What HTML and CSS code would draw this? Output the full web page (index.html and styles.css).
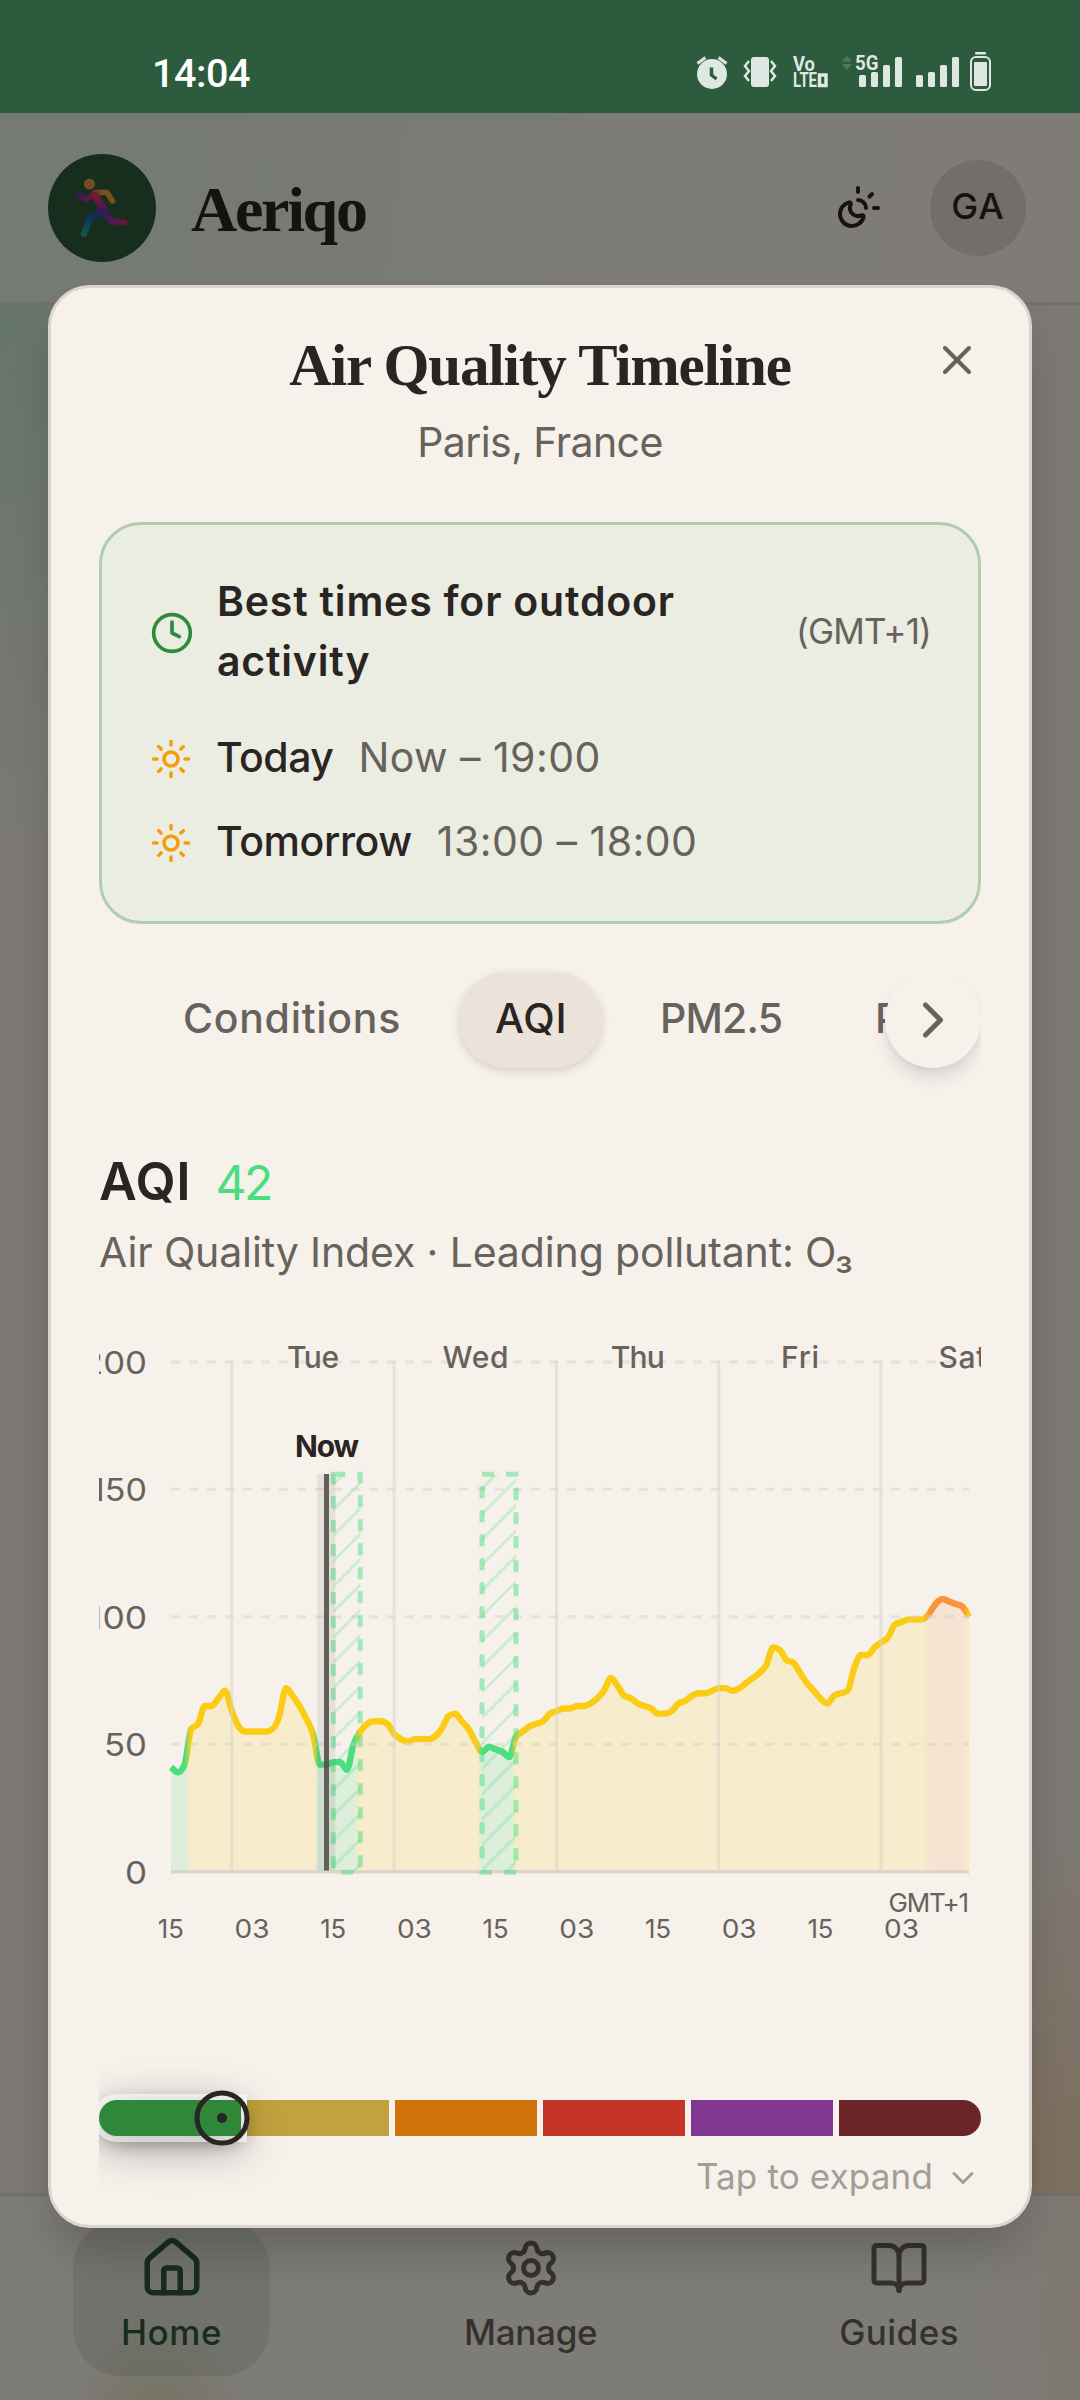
FILE: index.html
```html
<!DOCTYPE html>
<html lang="en">
<head>
<meta charset="utf-8">
<title>Aeriqo</title>
<meta name="viewport" content="width=device-width">
<link rel="stylesheet" href="styles.css">
</head>
<body>
<div class="screen">
  <div class="status">
    <span class="status-time">14:04</span>
    <svg class="status-icons" width="304" height="48" viewBox="692 48 304 48" fill="#dfe7e2">
      <ellipse cx="712" cy="74" rx="15" ry="15"/>
      <path d="M697.500 63.500l8-6M726.500 63.500l-8-6" stroke="#dfe7e2" stroke-width="3"/>
      <path d="M711.500 67.500v7.500l5 4" fill="none" stroke="#2d5b3d" stroke-width="3.500"/>
      <rect x="751" y="57" width="18" height="30" rx="3"/>
      <path d="M749 62l-4 5 4 5-4 5 4 5M771 62l4 5-4 5 4 5-4 5" transform="translate(0 -1)" fill="none" stroke="#dfe7e2" stroke-width="2.500"/>
      <text class="vo" x="793" y="71" textLength="22" lengthAdjust="spacingAndGlyphs">Vo</text>
      <text class="vo" x="793" y="87" textLength="24" lengthAdjust="spacingAndGlyphs">LTE</text>
      <path d="M819.500 75h6.500v10.500h-6.500z" fill="none" stroke="#dfe7e2" stroke-width="3.500"/>
      <path d="M842 61.500l5-6 5 6zM842 64l5 6 5-6z" fill="#50775d"/>
      <text class="fiveg" x="855" y="70" textLength="23.500" lengthAdjust="spacingAndGlyphs">5G</text>
      <rect x="859" y="75" width="7" height="12" rx="1.500"/><rect x="871" y="72" width="7" height="15" rx="1.500"/><rect x="883" y="65" width="7" height="22" rx="1.500"/><rect x="895" y="57" width="7" height="30" rx="1.500"/>
      <rect x="916" y="75" width="7" height="12" rx="1.500"/><rect x="928" y="72" width="7" height="15" rx="1.500"/><rect x="940" y="65" width="7" height="22" rx="1.500"/><rect x="952" y="57" width="7" height="30" rx="1.500"/>
      <rect x="971" y="57" width="19" height="33" rx="5" fill="none" stroke="#dfe7e2" stroke-width="2"/>
      <rect x="974" y="62" width="13" height="24" rx="1"/><rect x="975" y="52" width="11" height="2.500" rx="1"/>
    </svg>
  </div>

  <div class="app">
    <header class="topbar">
      <div class="logo">
        <svg width="60" height="66" viewBox="72 175 60 66" fill="none" stroke-linecap="round" stroke-linejoin="round">
          <defs>
            <linearGradient id="arm" gradientUnits="userSpaceOnUse" x1="94" y1="198" x2="106" y2="190"><stop offset="0" stop-color="#d8384f"/><stop offset=".7" stop-color="#f0a33a"/></linearGradient>
            <linearGradient id="hand" gradientUnits="userSpaceOnUse" x1="79" y1="194" x2="95" y2="194"><stop offset="0" stop-color="#7a2fb5"/><stop offset="1" stop-color="#d0357a"/></linearGradient>
            <linearGradient id="torso" gradientUnits="userSpaceOnUse" x1="96" y1="196" x2="104" y2="213"><stop offset="0" stop-color="#d93a66"/><stop offset="1" stop-color="#8a2bb8"/></linearGradient>
            <linearGradient id="leg" gradientUnits="userSpaceOnUse" x1="104" y1="212" x2="84" y2="235"><stop offset="0" stop-color="#5a34b4"/><stop offset=".4" stop-color="#1c62c4"/><stop offset="1" stop-color="#1fb394"/></linearGradient>
            <linearGradient id="foot" gradientUnits="userSpaceOnUse" x1="105" y1="213" x2="126" y2="223"><stop offset="0" stop-color="#7a2fb5"/><stop offset=".7" stop-color="#b5309a"/><stop offset="1" stop-color="#c83a5a"/></linearGradient>
          </defs>
          <circle cx="89.500" cy="184" r="5.500" fill="#e69a3c"/>
          <path d="M79.500 194.500l6.500 6 7-7" stroke="url(#hand)" stroke-width="5"/>
          <path d="M95 192.500h12l5.500 8.500" stroke="url(#arm)" stroke-width="5.500"/>
          <path d="M95.500 196l8.500 15" stroke="url(#torso)" stroke-width="8"/>
          <path d="M105.500 214l5.500 7 13.500 1.500" stroke="url(#foot)" stroke-width="6"/>
          <path d="M102 211.500l-11.500 6.500-6.500 16" stroke="url(#leg)" stroke-width="6"/>
        </svg>
      </div>
      <span class="brand">Aeriqo</span>
      <svg class="theme" width="48" height="48" viewBox="0 0 24 24" fill="none" stroke="currentColor" stroke-width="2" stroke-linecap="round" stroke-linejoin="round"><path d="M12 2v2"/><path d="M14.837 16.385a6 6 0 1 1-7.223-7.222c.624-.147.97.66.715 1.248a4 4 0 0 0 5.26 5.259c.589-.255 1.396.09 1.248.715"/><path d="M16 12a4 4 0 0 0-4-4"/><path d="m19 5-1.256 1.256"/><path d="M20 12h2"/></svg>
      <div class="user">GA</div>
    </header>
    <main class="backdrop"></main>
    <nav class="tabbar">
      <a class="nav-item nav-active">
        <svg width="60" height="60" viewBox="0 0 24 24"><path d="M15 21v-8a1 1 0 0 0-1-1h-4a1 1 0 0 0-1 1v8"/><path d="M3 10a2 2 0 0 1 .709-1.528l7-5.999a2 2 0 0 1 2.582 0l7 5.999A2 2 0 0 1 21 10v9a2 2 0 0 1-2 2H5a2 2 0 0 1-2-2z"/></svg>
        <span class="nav-home">Home</span>
      </a>
      <a class="nav-item">
        <svg width="60" height="60" viewBox="0 0 24 24"><path d="M9.671 4.136a2.340 2.340 0 0 1 4.659 0 2.340 2.340 0 0 0 3.319 1.915 2.340 2.340 0 0 1 2.330 4.033 2.340 2.340 0 0 0 0 3.831 2.340 2.340 0 0 1-2.330 4.033 2.340 2.340 0 0 0-3.319 1.915 2.340 2.340 0 0 1-4.659 0 2.340 2.340 0 0 0-3.320-1.915 2.340 2.340 0 0 1-2.330-4.033 2.340 2.340 0 0 0 0-3.831A2.340 2.340 0 0 1 6.350 6.051a2.340 2.340 0 0 0 3.319-1.915"/><circle cx="12" cy="12" r="3"/></svg>
        <span class="nav-manage">Manage</span>
      </a>
      <a class="nav-item">
        <svg width="60" height="60" viewBox="0 0 24 24"><path d="M12 7v14"/><path d="M3 18a1 1 0 0 1-1-1V4a1 1 0 0 1 1-1h5a4 4 0 0 1 4 4 4 4 0 0 1 4-4h5a1 1 0 0 1 1 1v13a1 1 0 0 1-1 1h-6a3 3 0 0 0-3 3 3 3 0 0 0-3-3z"/></svg>
        <span class="nav-guides">Guides</span>
      </a>
    </nav>
  </div>

  <div class="overlay">
    <section class="modal">
      <svg class="close" width="48" height="48" viewBox="0 0 24 24"><path d="M18 6 6 18"/><path d="m6 6 12 12"/></svg>
      <h1 class="title">Air Quality Timeline</h1>
      <p class="place">Paris, France</p>

      <div class="best">
        <div class="best-head">
          <svg class="clock" width="44" height="44" viewBox="0 0 24 24"><circle cx="12" cy="12" r="10"/><path d="M12 6v6l4 2"/></svg>
          <h2 class="best-title">Best times for outdoor activity</h2>
          <span class="zone">(GMT+1)</span>
        </div>
        <div class="slot">
          <svg class="sun" width="42" height="42" viewBox="0 0 24 24"><circle cx="12" cy="12" r="4"/><path d="M12 2v2M12 20v2M4.930 4.930l1.410 1.410M17.660 17.660l1.410 1.410M2 12h2M20 12h2M6.340 17.660l-1.410 1.410M19.070 4.930l-1.410 1.410"/></svg>
          <span class="slot-day slot-today">Today</span><span class="slot-time">Now – 19:00</span>
        </div>
        <div class="slot">
          <svg class="sun" width="42" height="42" viewBox="0 0 24 24"><circle cx="12" cy="12" r="4"/><path d="M12 2v2M12 20v2M4.930 4.930l1.410 1.410M17.660 17.660l1.410 1.410M2 12h2M20 12h2M6.340 17.660l-1.410 1.410M19.070 4.930l-1.410 1.410"/></svg>
          <span class="slot-day">Tomorrow</span><span class="slot-time">13:00 – 18:00</span>
        </div>
      </div>

      <div class="tabs">
        <span class="tab">Conditions</span>
        <span class="tab tab-on">AQI</span>
        <span class="tab tab-pm">PM2.5</span>
        <span class="tab tab-pm">PM10</span>
        <span class="next"><svg width="60" height="60" viewBox="0 0 24 24"><path d="m9 18 6-6-6-6"/></svg></span>
      </div>

      <div class="metric"><h3 class="metric-name">AQI</h3><span class="metric-value">42</span></div>
      <p class="metric-note">Air Quality Index · Leading pollutant: O₃</p>

      <svg class="chart" id="chart" width="882" height="660" viewBox="99 1320 882 660">
        <defs>
          <linearGradient id="level" gradientUnits="userSpaceOnUse" x1="0" x2="1080" y1="0" y2="0"></linearGradient>
          <pattern id="hatch" patternUnits="userSpaceOnUse" width="18" height="18" patternTransform="translate(8.300 0) rotate(45)"><rect width="3" height="18" fill="#4ade80" fill-opacity=".24"/></pattern>
        </defs>
        <path id="area" fill="url(#level)" fill-opacity=".15"/>
        <path id="line" fill="none" stroke="url(#level)" stroke-width="6.400" stroke-linejoin="round"/>
        <g id="grid" stroke="#dad2ca" stroke-opacity=".5" stroke-width="3"></g>
        <path d="M171 1871.700H969" stroke="#ddd5cb" stroke-width="3.500"/>
        <g fill="url(#hatch)" stroke="#4ade80" stroke-opacity=".48" stroke-width="5" stroke-dasharray="12 12">
          <rect x="333.300" y="1474.300" width="27" height="398"/>
          <rect x="482" y="1474.300" width="34" height="398"/>
        </g>
        <rect x="317.300" y="1474" width="18" height="396.500" fill="#57534e" fill-opacity=".1"/>
        <path d="M326.500 1474v396.500" stroke="#57534e" stroke-opacity=".92" stroke-width="5"/>
        <text class="now" x="326.500" y="1456.700">Now</text>
        <g class="ylab" id="ylab"></g>
        <g class="days" id="days"></g>
        <g class="hours" id="hours"></g>
        <text class="gmt" x="968" y="1911.700">GMT+1</text>
      </svg>

      <div class="scale">
        <span class="seg seg-good"><svg class="marker" width="56" height="56" viewBox="0 0 56 56"><circle cx="28" cy="28" r="25" fill="none" stroke="#2a2523" stroke-width="5"/><circle cx="28" cy="28" r="5" fill="#2a2523"/></svg></span>
        <span class="seg seg-moderate"></span>
        <span class="seg seg-sensitive"></span>
        <span class="seg seg-unhealthy"></span>
        <span class="seg seg-very"></span>
        <span class="seg seg-hazard"></span>
      </div>
      <div class="expand">Tap to expand <svg width="36" height="36" viewBox="0 0 24 24"><path d="m6 9 6 6 6-6"/></svg></div>
    </section>
  </div>
</div>
<script src="chart.js"></script>
</body>
</html>
```
FILE: styles.css
```css
* { box-sizing: border-box; }
body { margin: 0; font-family: Inter, sans-serif; color: #2a2523; }
h1, h2, h3, p { margin: 0; }
.screen { position: relative; width: 1080px; height: 2400px; overflow: hidden; display: flex; flex-direction: column; }

.status { height: 113px; background: #2d5b3d; display: flex; align-items: flex-start; justify-content: space-between; padding: 48px 84px 0 152px; }
.status-time { font: 500 39.5px/48px Roboto, sans-serif; letter-spacing: -.44px; color: #fff; padding-top: 2px; }
.vo { font: 700 20px Roboto, sans-serif; }
.fiveg { font: 700 21px Roboto, sans-serif; }

.app { flex: 1; display: flex; flex-direction: column; }
.topbar { height: 192px; border-bottom: 3px solid #e6dfd6; background: linear-gradient(97deg, #eaf5e8 0%, #ecf5e7 22%, #fdf8ef 66%, #fef9f1 100%); display: flex; align-items: center; padding: 0 54px 0 48px; }
.logo { width: 108px; height: 108px; border-radius: 50%; background: #2e5a3c; display: flex; align-items: center; justify-content: center; }
.brand { font: 700 64px/64px "Liberation Serif", serif; letter-spacing: -2.3px; margin-left: 35px; padding-top: 4px; flex: 1; }
.theme { margin-right: 48px; }
.user { width: 96px; height: 96px; border-radius: 50%; background: #e5dcd2; display: flex; align-items: center; justify-content: center; font-size: 36px; font-weight: 450; letter-spacing: 1px; padding-bottom: 4px; }
.backdrop { flex: 1; background:
  radial-gradient(ellipse 600px 560px at 0 0, #cbead2 0%, rgba(203,234,210,0) 100%),
  radial-gradient(ellipse 500px 380px at 100% 100%, #fadfc0 15%, rgba(250,223,192,0) 100%),
  #f9f2e9; }
.tabbar { height: 207px; border-top: 3px solid #e6dfd6; padding: 24px 0; display: flex; justify-content: space-around; align-items: flex-start; background:
  radial-gradient(ellipse 100px 110px at 158px 225px, rgba(220,214,160,.6), rgba(220,214,160,0)),
  radial-gradient(ellipse 110px 400px at 100% 60%, rgba(248,232,210,.6), rgba(248,232,210,0)),
  #fdf9f3; }
.nav-item { height: 156px; padding: 18px 48px 0; border-radius: 48px; display: flex; flex-direction: column; align-items: center; gap: 10px; font-size: 35px; line-height: 48px; font-weight: 450; color: #6b645d; }
.nav-item svg { fill: none; stroke: currentColor; stroke-width: 2; stroke-linecap: round; stroke-linejoin: round; }
.nav-active { color: #2e5a3c; background: rgba(46,90,60,.12); }
.nav-active svg { transform: scale(1.1); }
.nav-home { letter-spacing: .6px; }
.nav-manage { letter-spacing: -.3px; }
.nav-guides { letter-spacing: .45px; }

.overlay { position: absolute; inset: 113px 0 0; background: rgba(0,0,0,.5); padding: 172px 48px 0; }
.modal { position: relative; height: 1943px; border: 3px solid #ddd5cd; border-radius: 42px; background: #f6f1eb; padding: 44px 48px 0; box-shadow: 0 30px 45px -9px rgba(0,0,0,.2); }
.modal svg { display: block; }
.close { position: absolute; right: 48px; top: 48px; fill: none; stroke: #67625c; stroke-width: 2; stroke-linecap: round; }
.title { font: 700 59px/66px "Liberation Serif", serif; letter-spacing: -1.15px; text-align: center; }
.place { font-size: 41px; line-height: 60px; letter-spacing: -.6px; color: #67625c; text-align: center; margin-top: 14px; }

.best { margin-top: 50px; height: 402px; border: 3px solid #b1cdae; border-radius: 42px; background: #ebede2; padding: 46px 48px 0; }
.best-head { display: flex; align-items: center; margin-bottom: 36px; }
.clock { fill: none; stroke: #2f8a3c; stroke-width: 2; stroke-linecap: round; stroke-linejoin: round; margin-right: 23px; margin-top: 4px; }
.best-title { flex: 1; font-size: 41px; line-height: 60px; font-weight: 570; letter-spacing: .8px; }
.zone { font-size: 35px; letter-spacing: -.82px; color: #67625c; margin-right: -1px; }
.slot { display: flex; align-items: center; height: 60px; margin-bottom: 24px; font-size: 41px; line-height: 60px; }
.sun { fill: none; stroke: #f59e0b; stroke-width: 2; stroke-linecap: round; margin-right: 24px; margin-top: 4px; }
.slot-day { font-weight: 470; letter-spacing: -.4px; margin-right: 25px; }
.slot-today { letter-spacing: -.5px; margin-right: 25px; }
.slot-time { color: #67625c; letter-spacing: .45px; }

.tabs { position: relative; margin-top: 48px; height: 96px; display: flex; gap: 24px; padding-left: 48px; overflow-x: clip; }
.tab { flex: none; padding: 0 36px; border-radius: 48px; font-size: 41px; line-height: 93px; font-weight: 460; letter-spacing: .7px; color: #67625c; width: 288px; }
.tab-on { width: 143px; background: #ebe2da; color: #2a2523; box-shadow: 0 3px 9px rgba(60,50,40,.18); }
.tab-pm { width: 191px; letter-spacing: -.8px; padding-left: 34px; }
.next { position: absolute; right: 0; top: 0; width: 96px; height: 96px; border-radius: 50%; background: #f6f1eb; display: flex; align-items: center; justify-content: center; box-shadow: 0 12px 18px -3px rgba(0,0,0,.12), 0 3px 8px -3px rgba(0,0,0,.08); }
.next svg { fill: none; stroke: #67625c; stroke-width: 2; stroke-linecap: round; stroke-linejoin: round; }

.metric { margin-top: 77px; display: flex; height: 72px; line-height: 73px; }
.metric-name { font-size: 52px; font-weight: 580; letter-spacing: .7px; }
.metric-value { font-size: 48px; font-weight: 400; letter-spacing: -2.5px; line-height: 76px; color: #4ade80; margin-left: 24px; }
.metric-note { margin-top: 5px; font-size: 41px; line-height: 60px; letter-spacing: -.13px; color: #67625c; white-space: nowrap; }

.chart { margin-top: 38px; overflow: hidden; fill: #67625c; }
.chart text { stroke: none; }
.now { font-size: 30px; font-weight: 680; letter-spacing: -1.2px; text-anchor: middle; fill: #2a2523; }
.ylab { font-size: 31px; text-anchor: end; }
.days { font-size: 30px; font-weight: 550; text-anchor: middle; }
.hours { font-size: 26px; text-anchor: middle; }
.gmt { font-size: 26px; letter-spacing: -1.2px; text-anchor: end; }

.scale { margin-top: 120px; height: 36px; display: flex; gap: 6px; overflow-x: clip; }
.seg { flex: 1; }
.seg-good { position: relative; z-index: 1; background: #2f8839; border-radius: 18px 0 0 18px; box-shadow: 0 0 0 6px rgba(255,255,255,.6), 0 6px 18px rgba(0,0,0,.36), 0 9px 45px rgba(0,0,0,.38); }
.seg-moderate { background: #c1a23f; }
.seg-sensitive { background: #cf740a; }
.seg-unhealthy { background: #c43528; }
.seg-very { background: #813690; }
.seg-hazard { background: #6b2529; border-radius: 0 18px 18px 0; }
.marker { position: absolute; left: 95px; top: -10px; }
.expand { margin-top: 13px; display: flex; justify-content: flex-end; align-items: center; gap: 12px; height: 54px; font-size: 35px; letter-spacing: .15px; color: #a29d97; }
.expand svg { fill: none; stroke: currentColor; stroke-width: 2; stroke-linecap: round; stroke-linejoin: round; margin-top: 4px; }
```
FILE: chart.js
```js
const SVG = 'http://www.w3.org/2000/svg';
const hourly = [41,39,42,56,58,65,65,68,71,63,57,55,55,55,55,56,61,72,69,65,60,54,42,42,43,43,40,50,55,58,
  59,59,58,54,52,51,52,52,52,53,56,61,62,59,56,51,47,49,48,47,45,53,55,57,58,59,62,63,64,64,
  65,65,66,68,71,76,73,69,68,66,65,64,62,62,63,66,67,69,70,70,71,72,72,71,72,74,76,78,81,88,
  87,83,82,78,74,71,68,66,69,70,71,80,85,85,88,90,92,97,98,99,99,99,101,105,107,106,105,104,100];
const step = 6.765, x0 = 171, yZero = 1871.7, unit = 2.549;
const pts = hourly.map((v, i) => [x0 + i * step, yZero - v * unit]);

// monotone cubic interpolation through the hourly points
function monotone(p) {
  const n = p.length, s = [], m = [];
  for (let i = 0; i < n - 1; i++) s.push((p[i + 1][1] - p[i][1]) / step);
  for (let i = 0; i < n; i++) {
    if (i === 0) m.push(s[0]);
    else if (i === n - 1) m.push(s[n - 2]);
    else {
      const a = s[i - 1], b = s[i];
      m.push((Math.sign(a) + Math.sign(b)) * Math.min(Math.abs(a), Math.abs(b), Math.abs(a + b) / 4));
    }
  }
  let d = `M${p[0][0]} ${p[0][1]}`;
  for (let i = 0; i < n - 1; i++) {
    const h = step / 3;
    d += `C${p[i][0] + h} ${p[i][1] + m[i] * h} ${p[i + 1][0] - h} ${p[i + 1][1] - m[i + 1] * h} ${p[i + 1][0]} ${p[i + 1][1]}`;
  }
  return d;
}
const curve = monotone(pts);
document.getElementById('line').setAttribute('d', curve);
document.getElementById('area').setAttribute('d', `${curve}V${yZero}H${x0}Z`);

function add(parent, name, attrs, text) {
  const el = document.createElementNS(SVG, name);
  for (const k in attrs) el.setAttribute(k, attrs[k]);
  if (text) el.textContent = text;
  document.getElementById(parent).appendChild(el);
}
const G = '#4ade80', Y = '#facc15', O = '#fb923c';
[[185, G], [190.5, Y], [313, Y], [318.5, G], [354, G], [359.5, Y], [477.5, Y], [482.5, G], [511.5, G], [516, Y], [923, Y], [930, O], [963, O], [969, Y]]
  .forEach(([x, c]) => add('level', 'stop', { offset: x / 1080, 'stop-color': c }));

const labelWidths = { 0: 22, 50: 43, 100: 59, 150: 56, 200: 65 };
[0, 50, 100, 150, 200].forEach(v => {
  const y = yZero - v * unit;
  if (v) add('grid', 'path', { d: `M171 ${y}H969`, 'stroke-dasharray': '9 9' });
  add('ylab', 'text', { x: 147, y: y + 12, textLength: labelWidths[v], lengthAdjust: 'spacingAndGlyphs' }, String(v));
});
[231.7, 394.2, 556.5, 718.8, 881].forEach(x => add('grid', 'path', { d: `M${x} 1361V1870` }));
[['Tue', 313, 52], ['Wed', 475.5, 66], ['Thu', 637.8, 54], ['Fri', 800, 38], ['Sat', 962.5, 48]]
  .forEach(([t, x, w]) => add('days', 'text', { x, y: 1368, textLength: w }, t));
for (let i = 0; i < 10; i++) {
  const t = i % 2 ? '03' : '15';
  add('hours', 'text', { x: 170.8 + i * 81.2, y: 1937.7, textLength: i % 2 ? 35 : 26, lengthAdjust: 'spacingAndGlyphs' }, t);
}
```
